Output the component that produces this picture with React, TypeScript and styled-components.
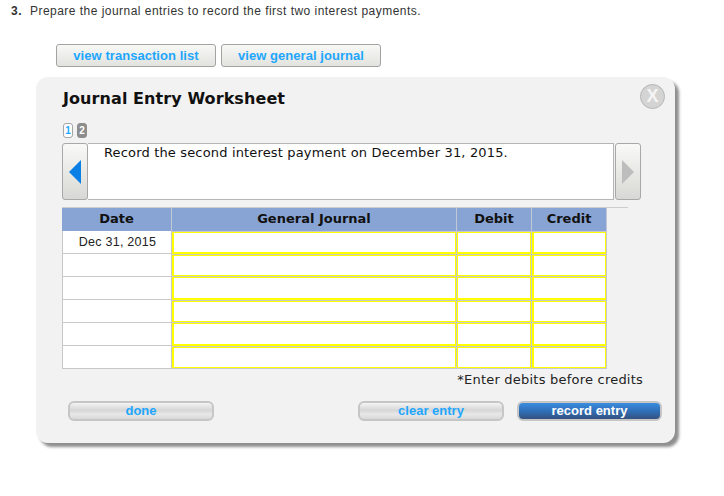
import React from 'react';
import styled, {createGlobalStyle} from 'styled-components';

const GlobalStyle = createGlobalStyle`
  body {
    margin: 0;
    background: #fff;
    font-family: "Liberation Sans", Arial, sans-serif;
  }
`

const Page = styled.div`
  width: 724px;
  height: 496px;
  overflow: hidden;
  padding: 4px 0 0 36px;
  box-sizing: border-box;
`
const Question = styled.p`
  margin: 0 0 0 -25px;
  height: 15px;
  display: flex;
  gap: 8px;
  font-size: 12px;
  line-height: 15px;
  letter-spacing: 0.47px;
  color: #333;
`
const ViewBar = styled.div`
  display: flex;
  gap: 5px;
  margin: 25px 0 10px 20px;
`
const ViewButton = styled.button`
  width: 160px;
  height: 23px;
  padding: 0;
  border: 1px solid #a3a3a3;
  border-radius: 3px;
  background: linear-gradient(#f8f8f6, #e2e2de);
  color: #1ea7fd;
  font: bold 13px "Liberation Sans", Arial, sans-serif;
  letter-spacing: 0.05px;
`
const Panel = styled.div`
  position: relative;
  width: 639px;
  height: 366px;
  padding: 10px 0 0 26px;
  box-sizing: border-box;
  border-radius: 12px;
  background: #f2f2f2;
  box-shadow: 4px 4px 3px #8f8f8f;
`
const Title = styled.h2`
  margin: 0 0 0 1px;
  height: 24px;
  font: bold 16px/24px "DejaVu Sans", Verdana, sans-serif;
  letter-spacing: 0.08px;
  color: #111;
`
const Close = styled.div`
  position: absolute;
  top: 7px;
  right: 10px;
  width: 23px;
  height: 23px;
  border: 1px solid #b5b5b5;
  border-radius: 50%;
  background: #d4d4d4;
  color: #f4f4f4;
  text-align: center;
  font: bold 18px/23px "Liberation Sans", Arial, sans-serif;
`
const Pager = styled.div`
  display: flex;
  gap: 4px;
  margin: 12px 0 5px 1px;
`
const PageTab = styled.div<{$active?: boolean}>`
  width: 10px;
  height: 15px;
  box-sizing: border-box;
  border: 1px solid ${p => (p.$active ? '#8d8d8d' : '#a5a5a5')};
  border-radius: 3px;
  background: ${p => (p.$active ? '#8d8d8d' : '#fff')};
  color: ${p => (p.$active ? '#fff' : '#1ea7fd')};
  text-align: center;
  font: bold 10px/13px "Liberation Sans", Arial, sans-serif;
`
const Prompt = styled.div`
  display: flex;
  width: 579px;
  height: 57px;
`
const Arrow = styled.div`
  flex: none;
  width: 26px;
  display: flex;
  align-items: center;
  justify-content: center;
  box-sizing: border-box;
  border: 1px solid #a8a8a8;
  border-radius: 3px;
  background: linear-gradient(#f9f9f7, #d8d8d4);
`
const PromptText = styled.div`
  flex: 1;
  box-sizing: border-box;
  margin-right: 1px;
  padding: 1px 0 0 16px;
  border: solid #b5b5b5;
  border-width: 1px 1px 1px 0;
  background: #fff;
  color: #111;
  font: 13px/16px "DejaVu Sans", Verdana, sans-serif;
  letter-spacing: 0.16px;
`
const Rule = styled.div`
  width: 566px;
  height: 1px;
  margin-top: 7px;
  background: #ccc;
`
const Sheet = styled.div`
  display: grid;
  grid-template-columns: 110px 285px 75px 75px;
  grid-auto-rows: 23px;
  width: 545px;
`
const Head = styled.div`
  box-sizing: border-box;
  border-right: 1px solid #c0c8d8;
  background: #88a4d4;
  color: #111;
  text-align: center;
  font: bold 13px/22px "DejaVu Sans", Verdana, sans-serif;
`
const DateCell = styled.div`
  box-sizing: border-box;
  padding-left: 1px;
  border: solid #c8c8c8;
  border-width: 0 1px 1px 1px;
  background: #fff;
  color: #222;
  text-align: center;
  font: 12.5px/22px "Liberation Sans", Arial, sans-serif;
  letter-spacing: 0.25px;
`
const EntryCell = styled.div<{$topLine?: boolean; $bottomLine?: boolean; $thickLeft?: boolean; $thickBottom?: boolean}>`
  display: flex;
  box-sizing: border-box;
  padding-top: ${p => (p.$topLine ? '1px' : '0')};
  padding-bottom: ${p => (p.$bottomLine ? '1px' : '0')};
  border-right: 1px solid #c8c8c8;
  background: #c8c8c8;
  &::before {
    content: '';
    flex: 1;
    background: #fff;
    border: 1px solid #ffff00;
    border-left-width: ${p => (p.$thickLeft ? '2px' : '1px')};
    border-bottom-width: ${p => (p.$thickBottom ? '2px' : '1px')};
  }
`
const Note = styled.div`
  width: 581px;
  margin-top: 2px;
  height: 17px;
  text-align: right;
  color: #222;
  font: 13px/17px "DejaVu Sans", Verdana, sans-serif;
  letter-spacing: 0.22px;
`
const Actions = styled.div`
  display: flex;
  width: 594px;
  margin: 13px 0 0 6px;
  gap: 13px;
`
const ActionButton = styled.button<{$primary?: boolean}>`
  width: ${p => (p.$primary ? '145px' : '146px')};
  height: 20px;
  padding: 0 0 2px;
  border: 2px solid #c6c6c6;
  border-radius: 6px;
  background: ${p => (p.$primary
    ? 'linear-gradient(#3a8ddf, #2f6fb8 50%, #35527f)'
    : 'linear-gradient(#f4f4f4, #d6d6d6 45%, #e8e8e8 70%, #d8d8d8)')};
  color: ${p => (p.$primary ? '#fff' : '#1ea7fd')};
  font: bold 13px/15px "Liberation Sans", Arial, sans-serif;
  &:first-child { margin-right: auto; }
`

const rows = ['Dec 31, 2015', '', '', '', '', ''];

const App: React.FC = () => {
  return (
    <Page>
      <GlobalStyle />
      <Question><b>3.</b> Prepare the journal entries to record the first two interest payments.</Question>
      <ViewBar>
        <ViewButton>view transaction list</ViewButton>
        <ViewButton>view general journal</ViewButton>
      </ViewBar>
      <Panel>
        <Title>Journal Entry Worksheet</Title>
        <Close>X</Close>
        <Pager>
          <PageTab>1</PageTab>
          <PageTab $active>2</PageTab>
        </Pager>
        <Prompt>
          <Arrow>
            <svg width="12" height="24" viewBox="0 0 12 24"><path d="M12 0V24L0 12Z" fill="#0a7fe6" /></svg>
          </Arrow>
          <PromptText>Record the second interest payment on December 31, 2015.</PromptText>
          <Arrow>
            <svg width="12" height="24" viewBox="0 0 12 24"><path d="M0 0V24L12 12Z" fill="#bdbdbd" /></svg>
          </Arrow>
        </Prompt>
        <Rule />
        <Sheet>
          <Head>Date</Head>
          <Head>General Journal</Head>
          <Head>Debit</Head>
          <Head>Credit</Head>
          {rows.map((date, i) => {
            const odd = i % 2 === 1;
            const line = {$topLine: odd || i === 0, $bottomLine: odd, $thickBottom: !odd};
            return (
              <React.Fragment key={i}>
                <DateCell>{date}</DateCell>
                <EntryCell {...line} $thickLeft />
                <EntryCell {...line} />
                <EntryCell {...line} $thickLeft />
              </React.Fragment>
            );
          })}
        </Sheet>
        <Note>*Enter debits before credits</Note>
        <Actions>
          <ActionButton>done</ActionButton>
          <ActionButton>clear entry</ActionButton>
          <ActionButton $primary>record entry</ActionButton>
        </Actions>
      </Panel>
    </Page>
  )
}

export default App;
